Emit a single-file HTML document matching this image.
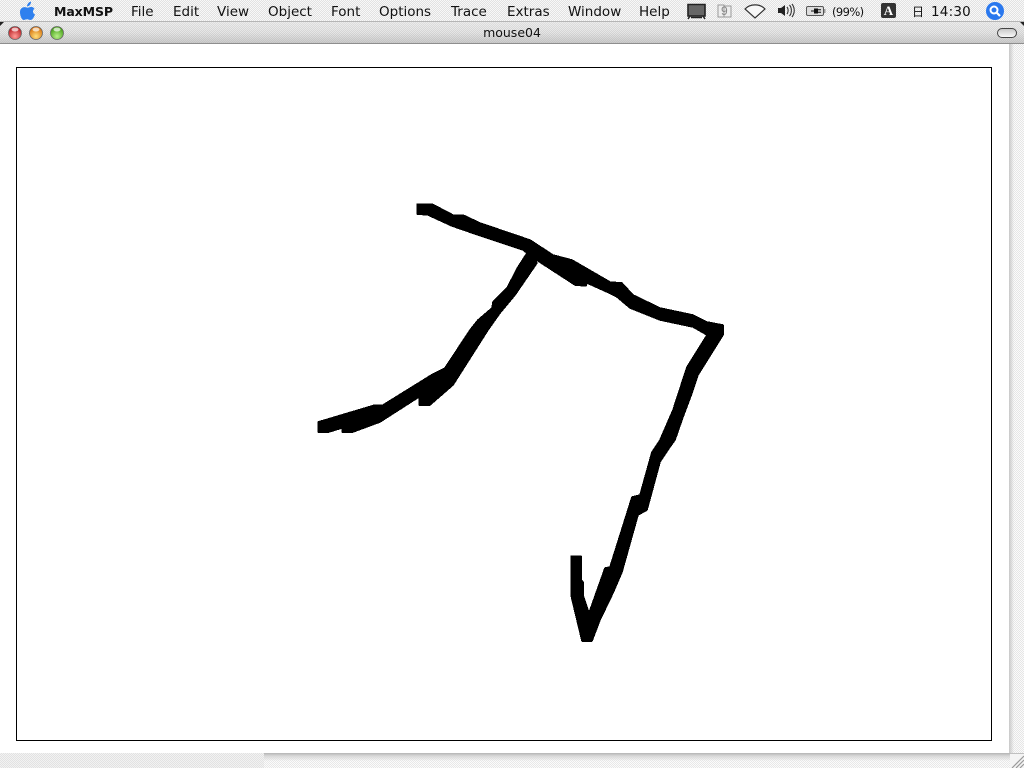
<!DOCTYPE html>
<html><head><meta charset="utf-8"><title>mouse04</title>
<style>
html,body{margin:0;padding:0;width:1024px;height:768px;overflow:hidden;background:#fff}
body{position:relative;font-family:"DejaVu Sans","Liberation Sans",sans-serif;color:#111}
.abs{position:absolute}
.dither{background-color:#f4f4f4;background-image:conic-gradient(#e2e2e2 25%,#f8f8f8 0 50%,#e2e2e2 0 75%,#f8f8f8 0);background-size:2px 2px}
#menu{left:0;top:0;width:1024px;height:21px;border-bottom:1px solid #b5b5b5}
#title{left:0;top:22px;width:1024px;height:21px;border-bottom:1px solid #8e8e8e;background-image:linear-gradient(rgba(255,255,255,.25),rgba(255,255,255,0) 50%,rgba(170,170,170,.45)),conic-gradient(#d4d4d4 25%,#e6e6e6 0 50%,#d4d4d4 0 75%,#e6e6e6 0);background-size:100% 100%,2px 2px}
.m{position:absolute;top:4px;font-size:13.5px;line-height:16px;white-space:nowrap}
#side{left:1009px;top:44px;width:15px;height:709px;background-image:linear-gradient(90deg,#c8c8c8,rgba(240,240,240,0) 5px),conic-gradient(#e6e6e6 25%,#fafafa 0 50%,#e6e6e6 0 75%,#fafafa 0);background-size:100% 100%,2px 2px}
#bl{left:0;top:753px;width:264px;height:15px;background-image:conic-gradient(#e2e2e2 25%,#f2f2f2 0 50%,#e2e2e2 0 75%,#f2f2f2 0);background-size:2px 2px}
#br{left:264px;top:753px;width:746px;height:15px;background-image:linear-gradient(#b4b4b4,#d8d8d8 3px,rgba(255,255,255,0) 8px),conic-gradient(#e8e8e8 25%,#fbfbfb 0 50%,#e8e8e8 0 75%,#fbfbfb 0);background-size:100% 100%,2px 2px}
#box{left:16px;top:67px;width:974px;height:672px;border:1px solid #000}
</style></head><body>
<div id="menu" class="abs dither"></div>
<svg class="abs" style="left:18px;top:0" width="20" height="21" viewBox="0 0 20 21"><path d="M2 12C2 8.500 5 6.500 7.500 7.300C9 7.800 10 7.800 11.500 7.200C13.500 6.500 15.500 7.200 16.500 8.800C14.500 10 14.300 13.300 17 14.500C16 17 14.500 20 12.500 20C11 20 10.500 19.200 9 19.200C7.500 19.200 7 20 5.500 20C3.500 19.500 2 15.500 2 12Z" fill="#2f80ee"/><path d="M9 6.500C9 4 10.800 2 13 1.500C13.200 4 11.500 6.200 9 6.500Z" fill="#2f80ee"/></svg>
<span class="m" style="left:54px;font-weight:bold;font-size:12.5px;letter-spacing:-.1px">MaxMSP</span>
<span class="m" style="left:131px">File</span>
<span class="m" style="left:173px">Edit</span>
<span class="m" style="left:217px">View</span>
<span class="m" style="left:268px">Object</span>
<span class="m" style="left:331px">Font</span>
<span class="m" style="left:379px">Options</span>
<span class="m" style="left:451px">Trace</span>
<span class="m" style="left:507px">Extras</span>
<span class="m" style="left:568px">Window</span>
<span class="m" style="left:639px">Help</span>
<svg class="abs" style="left:685px;top:1px" width="160" height="20" viewBox="0 0 160 20">
<path d="M3 3.500H20V15H3Z" fill="#666" stroke="#222" stroke-width="1.600"/><path d="M5 15L3 18M18 15L20 18M6 16.500H17" stroke="#222" fill="none" stroke-width="1.500"/>
<path d="M33 4H39V16H33ZM39 5H46V16H39" fill="#eee" stroke="#999"/><text x="36" y="14" font-size="12" fill="#888" font-family="Liberation Sans">9</text>
<path d="M60 8C65 2.500 75 2.500 80 8L70 17Z" fill="#f7f7f7" stroke="#333" stroke-width="1.200"/>
<path d="M93 7H96L100 4V15L96 12H93Z" fill="#222"/><path d="M102 6C103.500 8 103.500 11 102 13M104.500 4C107 7 107 12 104.500 15M107 3C110 7 110 12 107 16" fill="none" stroke="#333" stroke-width="1.100"/>
<rect x="121.500" y="5.500" width="17" height="9" rx="1.500" fill="#ddd" stroke="#555"/><path d="M126 10H129M133 8.800H136M133 11.200H136" stroke="#111" fill="none"/><rect x="129" y="7.500" width="4" height="5" fill="#111"/><rect x="139" y="8" width="1.500" height="4" fill="#999"/>
</svg>
<span class="m" style="left:832px;top:4px;font-size:11.500px;letter-spacing:-.6px">(99%)</span>
<div class="abs" style="left:881px;top:3px;width:15px;height:15px;background:#333;border-radius:2px;color:#fff;font:bold 13px/15px 'Liberation Serif',serif;text-align:center">A</div>
<span class="m" style="left:912px;top:4px;font-family:'Noto Sans CJK JP','Liberation Sans',sans-serif;font-size:12px">日</span>
<span class="m" style="left:931px;font-size:13.500px;letter-spacing:.2px">14:30</span>
<svg class="abs" style="left:985px;top:1px" width="20" height="20" viewBox="0 0 20 20"><circle cx="10" cy="10" r="9" fill="#2a78ee"/><circle cx="9" cy="9" r="3.500" fill="none" stroke="#fff" stroke-width="2"/><path d="M11.500 11.500L15 15" stroke="#fff" stroke-width="2.200"/></svg>
<div id="title" class="abs"></div>
<div class="abs" style="left:0;top:22px;width:0;height:0;border-top:4px solid #222;border-right:4px solid transparent"></div>
<div class="abs" style="right:0;top:22px;width:0;height:0;border-top:4px solid #222;border-left:4px solid transparent"></div>
<svg class="abs" style="left:0;top:22px" width="70" height="21" viewBox="0 0 70 21">
<defs>
<radialGradient id="r" cx=".5" cy=".75" r=".7"><stop offset="0" stop-color="#ff9c96"/><stop offset="1" stop-color="#b4161c"/></radialGradient>
<radialGradient id="o" cx=".5" cy=".75" r=".7"><stop offset="0" stop-color="#ffe07c"/><stop offset="1" stop-color="#d46c08"/></radialGradient>
<radialGradient id="g" cx=".5" cy=".75" r=".7"><stop offset="0" stop-color="#b8f088"/><stop offset="1" stop-color="#3e9a10"/></radialGradient>
</defs>
<circle cx="15" cy="11" r="6.500" fill="url(#r)" stroke="#666" stroke-width=".8"/><ellipse cx="15" cy="7.500" rx="3.500" ry="2" fill="#fff" opacity=".7"/>
<circle cx="36" cy="11" r="6.500" fill="url(#o)" stroke="#666" stroke-width=".8"/><ellipse cx="36" cy="7.500" rx="3.500" ry="2" fill="#fff" opacity=".7"/>
<circle cx="57" cy="11" r="6.500" fill="url(#g)" stroke="#666" stroke-width=".8"/><ellipse cx="57" cy="7.500" rx="3.500" ry="2" fill="#fff" opacity=".7"/>
</svg>
<div class="abs" style="left:0;width:1024px;top:25px;font-size:12.5px;line-height:15px;text-align:center">mouse04</div>
<div class="abs" style="left:997px;top:28px;width:18px;height:8px;border:1px solid #444;border-radius:5px;background:linear-gradient(#c8c8c8,#fafafa)"></div>
<div id="side" class="abs"></div>
<div id="bl" class="abs"></div>
<div id="br" class="abs"></div>
<div class="abs" style="left:1010px;top:753px;width:14px;height:15px;background:#f4f4f4;border-top:1px solid #c0c0c0;box-sizing:border-box"></div>
<svg class="abs" style="left:1010px;top:754px" width="14" height="14" viewBox="0 0 14 14"><path d="M2 14L14 2M6 14L14 6M10 14L14 10" stroke="#9a9a9a" stroke-width="1.200"/></svg>
<div id="box" class="abs"></div>
<svg class="abs" style="left:0;top:0" width="1024" height="768" viewBox="0 0 1024 768" shape-rendering="crispEdges">
<g fill="#000" stroke="#000" stroke-width="1.500" stroke-linejoin="round">
<polygon points="417,204 432,204 453,215 463,215 480,223 530,240 553,255 572,260 610,282 622,283 633,295 660,308 693,315 707,322 723,325 723,335 698,375 692,393 683,417 675,440 670,447 660,462 647,510 638,515 622,572 613,593 600,620 592,641 582,641 571,595 571,556 581,556 581,580 583,582 583,595 589,613 605,568 610,567 632,497 640,495 652,452 660,440 673,410 687,367 707,335 693,327 660,320 630,308 617,297 607,292 587,283 586,286 575,285 538,261 527,253 523,250 478,235 452,226 428,215 417,214"/>
<polygon points="527,253 518,267 507,288 493,302 492,308 478,320 470,330 445,368 433,374 383,405 375,405 318,422 318,432 329,432 342,428 342,432 353,432 380,422 419,397 419,405 430,405 453,385 488,330 500,313 515,295 537,263 532,253"/>
</g>
</svg>
</body></html>
